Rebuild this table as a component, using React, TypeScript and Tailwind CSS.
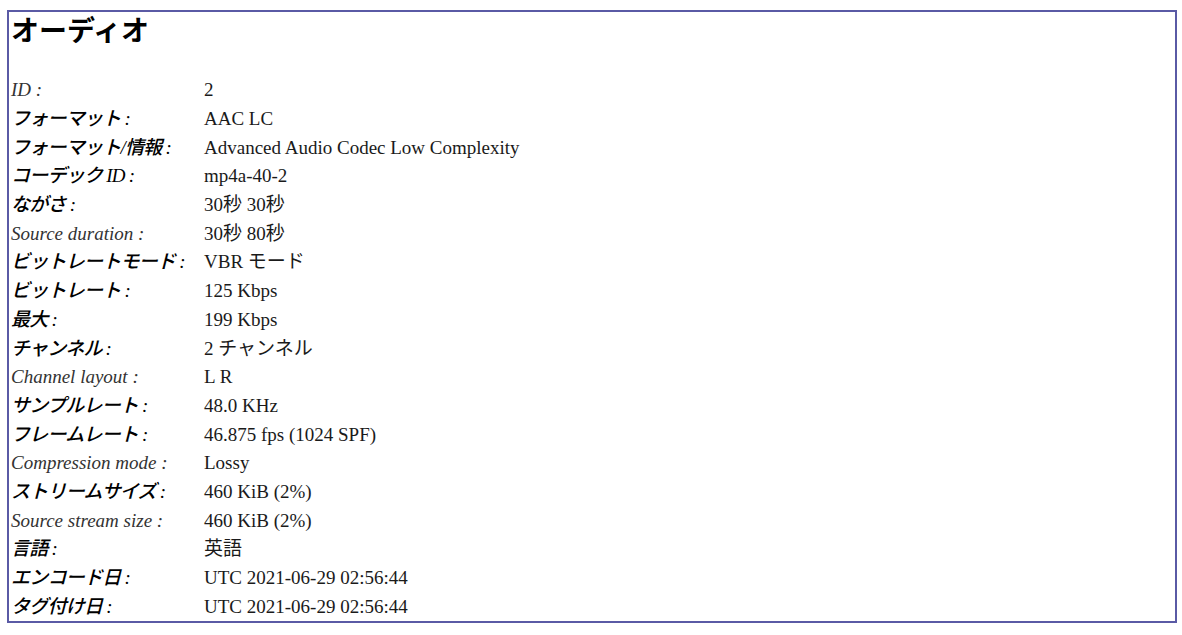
import React from 'react';

const rows: { label: string; value: string; en?: boolean }[] = [
  { label: 'ID :', value: '2', en: true },
  { label: 'フォーマット :', value: 'AAC LC' },
  { label: 'フォーマット/情報 :', value: 'Advanced Audio Codec Low Complexity' },
  { label: 'コーデック ID :', value: 'mp4a-40-2' },
  { label: 'ながさ :', value: '30秒 30秒' },
  { label: 'Source duration :', value: '30秒 80秒', en: true },
  { label: 'ビットレートモード :', value: 'VBR モード' },
  { label: 'ビットレート :', value: '125 Kbps' },
  { label: '最大 :', value: '199 Kbps' },
  { label: 'チャンネル :', value: '2 チャンネル' },
  { label: 'Channel layout :', value: 'L R', en: true },
  { label: 'サンプルレート :', value: '48.0 KHz' },
  { label: 'フレームレート :', value: '46.875 fps (1024 SPF)' },
  { label: 'Compression mode :', value: 'Lossy', en: true },
  { label: 'ストリームサイズ :', value: '460 KiB (2%)' },
  { label: 'Source stream size :', value: '460 KiB (2%)', en: true },
  { label: '言語 :', value: '英語' },
  { label: 'エンコード日 :', value: 'UTC 2021-06-29 02:56:44' },
  { label: 'タグ付け日 :', value: 'UTC 2021-06-29 02:56:44' },
];

export default function App() {
  return (
    <div className="w-[1182px] h-[635px] bg-white pt-[10px] pl-[7px]">
      <div className="w-[1170px] h-[613px] border-2 border-[#5a5aa5] pl-[2px] font-['Liberation_Serif','Noto_Sans_CJK_JP',serif] text-black">
        <h1 className="text-[28px] font-bold leading-[34px] font-['Noto_Sans_CJK_JP',sans-serif]">オーディオ</h1>
        <div className="mt-[30px] flex flex-col">
          {rows.map((r) => (
            <div key={r.label} className="flex h-[28.7px] items-center text-[19px] leading-[22px]">
              <div
                className={
                  r.en
                    ? "w-[193px] shrink-0 italic text-[#333] font-['Liberation_Serif',serif]"
                    : "w-[193px] shrink-0 italic text-black tracking-[-0.04em] font-['Liberation_Serif','Noto_Sans_CJK_JP',sans-serif] font-medium"
                }
              >
                {r.label}
              </div>
              <div className="text-[#1a1a1a]">{r.value}</div>
            </div>
          ))}
        </div>
      </div>
    </div>
  );
}
